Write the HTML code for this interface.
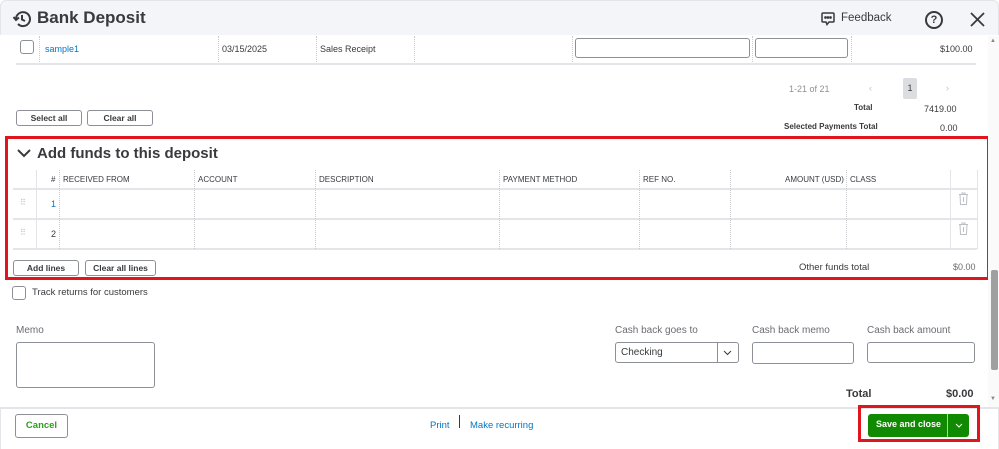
<!DOCTYPE html>
<html><head><meta charset="utf-8"><style>
*{box-sizing:border-box;margin:0;padding:0}
body{width:999px;height:449px;overflow:hidden;background:#fff;font-family:"Liberation Sans",sans-serif;color:#393a3d;position:relative}
.a{position:absolute}
.t{font-size:9px;white-space:nowrap}
.btn{position:absolute;border:1px solid #8d9096;border-radius:3px;background:#fff;font-size:8.5px;font-weight:bold;text-align:center;color:#393a3d}
.inp{position:absolute;border:1px solid #8d9096;border-radius:3px;background:#fff}
.vl{position:absolute;width:0;border-left:1px dotted #c8c9cc}
.hl{position:absolute;height:0;border-top:2px solid #e4e5e8}
.lbl{position:absolute;font-size:10px;color:#6b6c72}
</style></head><body>
<div class="a" style="left:0;top:0;width:999px;height:35px;background:#f4f5f8;border-radius:6px 6px 0 0;border:1px solid #e4e5e8;border-bottom:none"></div>
<svg class="a" style="left:12px;top:9px" width="20" height="20" viewBox="0 0 20 20" fill="none" stroke="#393a3d" stroke-width="2"><path d="M4 10a7 7 0 1 1 2 5"/><path d="M1.5 8l2.5 3 3-2.5"/><path d="M10 6v4.5l3 1.5"/></svg>
<div class="a" style="left:37px;top:8px;font-size:17px;font-weight:bold;color:#393a3d">Bank Deposit</div>
<svg class="a" style="left:821px;top:12px" width="14" height="14" viewBox="0 0 14 14" fill="none" stroke="#393a3d" stroke-width="1.5"><path d="M2 1h10a1 1 0 0 1 1 1v7a1 1 0 0 1-1 1H8l-2 2.5L5 10H2a1 1 0 0 1-1-1V2a1 1 0 0 1 1-1z"/><circle cx="4.5" cy="5.5" r=".6" fill="#393a3d"/><circle cx="7" cy="5.5" r=".6" fill="#393a3d"/><circle cx="9.5" cy="5.5" r=".6" fill="#393a3d"/></svg>
<div class="a" style="left:841px;top:12px;font-size:11.5px;color:#393a3d">Feedback</div>
<div class="a" style="left:925px;top:11px;width:18px;height:18px;border:2px solid #393a3d;border-radius:50%;font-size:11px;font-weight:bold;text-align:center;line-height:14px">?</div>
<svg class="a" style="left:970px;top:12px" width="15" height="15" viewBox="0 0 15 15" stroke="#393a3d" stroke-width="1.8"><path d="M1 1l13 13M14 1L1 14"/></svg>
<div class="a" style="left:20px;top:40px;width:14px;height:14px;border:1px solid #8d9096;border-radius:3px"></div>
<div class="vl" style="left:39px;top:36px;height:28px"></div>
<div class="vl" style="left:218px;top:36px;height:28px"></div>
<div class="vl" style="left:316px;top:36px;height:28px"></div>
<div class="vl" style="left:414px;top:36px;height:28px"></div>
<div class="vl" style="left:572px;top:36px;height:28px"></div>
<div class="vl" style="left:752px;top:36px;height:28px"></div>
<div class="vl" style="left:851px;top:36px;height:28px"></div>
<div class="t a" style="left:45px;top:44px;color:#0077c5">sample1</div>
<div class="t a" style="left:222px;top:44px">03/15/2025</div>
<div class="t a" style="left:320px;top:44px">Sales Receipt</div>
<div class="inp" style="left:575px;top:38px;width:175px;height:20px"></div>
<div class="inp" style="left:755px;top:38px;width:93px;height:20px"></div>
<div class="t a" style="left:940px;top:44px">$100.00</div>
<div class="hl" style="left:16px;top:63px;width:960px"></div>
<div class="t a" style="left:789px;top:84px;color:#8d9096">1-21 of 21</div>
<div class="t a" style="left:869px;top:83px;color:#babec5">‹</div>
<div class="a" style="left:903px;top:78px;width:14px;height:21px;background:#dcdde0;border-radius:2px;font-size:9px;text-align:center;line-height:21px">1</div>
<div class="t a" style="left:946px;top:83px;color:#babec5">›</div>
<div class="t a" style="left:854px;top:103px;font-size:8px;font-weight:bold">Total</div>
<div class="t a" style="left:924px;top:104px">7419.00</div>
<div class="t a" style="left:784px;top:122px;font-size:8px;font-weight:bold">Selected Payments Total</div>
<div class="t a" style="left:940px;top:123px">0.00</div>
<div class="btn" style="left:16px;top:110px;width:66px;height:16px;line-height:14px">Select all</div>
<div class="btn" style="left:87px;top:110px;width:66px;height:16px;line-height:14px">Clear all</div>
<div class="a" style="left:5px;top:136px;width:985px;height:144px;border:3px solid #e0161e"></div>
<svg class="a" style="left:17px;top:148px" width="14" height="10" viewBox="0 0 14 10" fill="none" stroke="#393a3d" stroke-width="2"><path d="M1 2l6 6 6-6"/></svg>
<div class="a" style="left:37px;top:145px;font-size:15px;font-weight:bold;color:#393a3d">Add funds to this deposit</div>
<div class="hl" style="left:13px;top:188px;width:964px"></div>
<div class="hl" style="left:13px;top:218px;width:964px"></div>
<div class="hl" style="left:13px;top:248px;width:964px"></div>
<div class="vl" style="left:36px;top:170px;height:79px;border-left:1px solid #e4e5e8"></div>
<div class="vl" style="left:59px;top:170px;height:79px"></div>
<div class="vl" style="left:194px;top:170px;height:79px"></div>
<div class="vl" style="left:315px;top:170px;height:79px"></div>
<div class="vl" style="left:499px;top:170px;height:79px"></div>
<div class="vl" style="left:639px;top:170px;height:79px"></div>
<div class="vl" style="left:730px;top:170px;height:79px"></div>
<div class="vl" style="left:846px;top:170px;height:79px"></div>
<div class="vl" style="left:950px;top:170px;height:79px;border-left:1px solid #e4e5e8"></div>
<div class="vl" style="left:977px;top:170px;height:79px;border-left:1px solid #e4e5e8"></div>
<div class="t a" style="left:51px;top:175px;font-size:8px">#</div>
<div class="t a" style="left:63px;top:175px;font-size:8px">RECEIVED FROM</div>
<div class="t a" style="left:198px;top:175px;font-size:8px">ACCOUNT</div>
<div class="t a" style="left:319px;top:175px;font-size:8px">DESCRIPTION</div>
<div class="t a" style="left:503px;top:175px;font-size:8px">PAYMENT METHOD</div>
<div class="t a" style="left:643px;top:175px;font-size:8px">REF NO.</div>
<div class="t a" style="left:785px;top:175px;font-size:8px">AMOUNT (USD)</div>
<div class="t a" style="left:850px;top:175px;font-size:8px">CLASS</div>
<div class="t a" style="left:20px;top:198px;color:#babec5;font-size:8px">⠿</div>
<div class="t a" style="left:20px;top:228px;color:#babec5;font-size:8px">⠿</div>
<div class="t a" style="left:51px;top:199px;color:#0077c5">1</div>
<div class="t a" style="left:51px;top:229px">2</div>
<svg class="a" style="left:958px;top:192px" width="11" height="13" viewBox="0 0 11 13" fill="none" stroke="#babec5"><path d="M1 2.5h9M4 2.5V1h3v1.5M2 2.5l.5 10h6l.5-10M5.5 5v5"/></svg>
<svg class="a" style="left:958px;top:222px" width="11" height="13" viewBox="0 0 11 13" fill="none" stroke="#babec5"><path d="M1 2.5h9M4 2.5V1h3v1.5M2 2.5l.5 10h6l.5-10M5.5 5v5"/></svg>
<div class="btn" style="left:13px;top:260px;width:66px;height:16px;line-height:14px">Add lines</div>
<div class="btn" style="left:85px;top:260px;width:71px;height:16px;line-height:14px">Clear all lines</div>
<div class="t a" style="left:799px;top:262px;font-size:9.5px">Other funds total</div>
<div class="t a" style="left:953px;top:262px;color:#6b6c72">$0.00</div>
<div class="a" style="left:12px;top:286px;width:14px;height:14px;border:1px solid #8d9096;border-radius:3px"></div>
<div class="t a" style="left:32px;top:287px;font-size:9.5px">Track returns for customers</div>
<div class="lbl" style="left:16px;top:325px">Memo</div>
<div class="inp" style="left:16px;top:342px;width:139px;height:46px"></div>
<div class="lbl" style="left:615px;top:325px">Cash back goes to</div>
<div class="inp" style="left:615px;top:342px;width:124px;height:21px"></div>
<div class="a" style="left:717px;top:343px;width:0;height:19px;border-left:1px solid #8d9096"></div>
<div class="t a" style="left:621px;top:347px;font-size:10px">Checking</div>
<svg class="a" style="left:723px;top:350px" width="9" height="6" viewBox="0 0 9 6" fill="none" stroke="#393a3d"><path d="M1 1l3.5 3.5L8 1"/></svg>
<div class="lbl" style="left:752px;top:325px">Cash back memo</div>
<div class="inp" style="left:752px;top:342px;width:102px;height:22px"></div>
<div class="lbl" style="left:867px;top:325px">Cash back amount</div>
<div class="inp" style="left:867px;top:342px;width:108px;height:21px"></div>
<div class="a" style="left:846px;top:388px;font-size:11px;font-weight:bold">Total</div>
<div class="a" style="left:946px;top:388px;font-size:11px;font-weight:bold">$0.00</div>
<div class="a" style="left:988px;top:36px;width:11px;height:371px;background:#fafafa"></div>
<div class="a" style="left:990px;top:38px;font-size:6px;color:#888">▲</div>
<div class="a" style="left:990px;top:396px;font-size:6px;color:#888">▼</div>
<div class="a" style="left:991px;top:270px;width:7px;height:100px;background:#a0a0a0;border-radius:2px"></div>
<div class="a" style="left:0;top:407px;width:999px;height:42px;background:#fff;border-top:2px solid #e4e5e8;border-left:1px solid #e4e5e8;border-right:1px solid #e4e5e8"></div>
<div class="btn" style="left:15px;top:414px;width:53px;height:24px;line-height:22px;color:#2ca01c;font-size:9.5px">Cancel</div>
<div class="t a" style="left:430px;top:420px;color:#0077c5;font-size:9.5px">Print</div>
<div class="a" style="left:459px;top:415px;width:1px;height:13px;background:#393a3d"></div>
<div class="t a" style="left:470px;top:420px;color:#0077c5;font-size:9.5px">Make recurring</div>
<div class="a" style="left:858px;top:405px;width:122px;height:37px;border:3px solid #e0161e"></div>
<div class="a" style="left:868px;top:414px;width:101px;height:23px;background:#108a00;border-radius:3px"></div>
<div class="a" style="left:947px;top:414px;width:1px;height:23px;background:#a8d5a0"></div>
<div class="t a" style="left:876px;top:419px;color:#fff;font-weight:bold;font-size:9px">Save and close</div>
<svg class="a" style="left:955px;top:423px" width="8" height="5" viewBox="0 0 8 5" fill="none" stroke="#fff"><path d="M1 1l3 3 3-3"/></svg>
</body></html>
